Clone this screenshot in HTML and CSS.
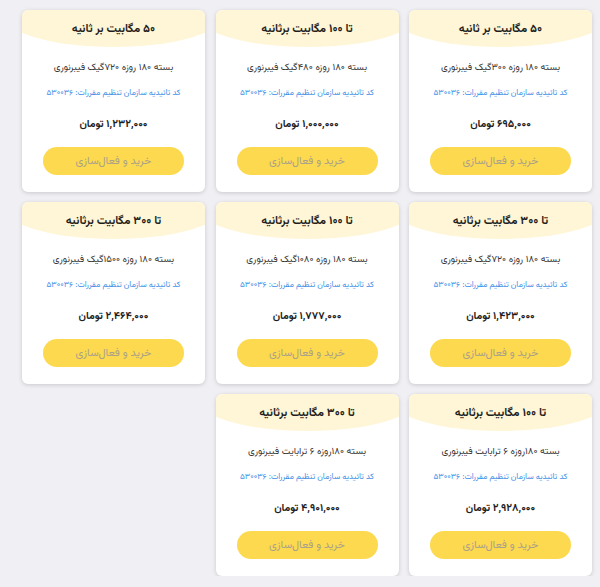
FILE: index.html
```html
<!DOCTYPE html>
<html lang="fa" dir="rtl">
<head>
<meta charset="utf-8">
<title>بسته‌های اینترنت</title>
<link rel="stylesheet" href="styles.css">
</head>
<body>
<div class="grid">
  <div class="card">
    <div class="head"><h3 class="title">۵۰ مگابیت بر ثانیه</h3></div>
    <p class="desc">بسته ۱۸۰ روزه ۳۰۰گیک فیبرنوری</p>
    <p class="code">کد تائیدیه سازمان تنظیم مقررات: ۵۳۰۰۳۶</p>
    <p class="price">۶۹۵,۰۰۰ تومان</p>
    <button class="buy">خرید و فعال‌سازی</button>
  </div>
  <div class="card">
    <div class="head"><h3 class="title">تا ۱۰۰ مگابیت برثانیه</h3></div>
    <p class="desc">بسته ۱۸۰ روزه ۴۸۰گیک فیبرنوری</p>
    <p class="code">کد تائیدیه سازمان تنظیم مقررات: ۵۳۰۰۳۶</p>
    <p class="price">۱,۰۰۰,۰۰۰ تومان</p>
    <button class="buy">خرید و فعال‌سازی</button>
  </div>
  <div class="card">
    <div class="head"><h3 class="title">۵۰ مگابیت بر ثانیه</h3></div>
    <p class="desc">بسته ۱۸۰ روزه ۷۲۰گیک فیبرنوری</p>
    <p class="code">کد تائیدیه سازمان تنظیم مقررات: ۵۳۰۰۳۶</p>
    <p class="price">۱,۲۳۲,۰۰۰ تومان</p>
    <button class="buy">خرید و فعال‌سازی</button>
  </div>
  <div class="card">
    <div class="head"><h3 class="title">تا ۳۰۰ مگابیت برثانیه</h3></div>
    <p class="desc">بسته ۱۸۰ روزه ۷۲۰گیک فیبرنوری</p>
    <p class="code">کد تائیدیه سازمان تنظیم مقررات: ۵۳۰۰۳۶</p>
    <p class="price">۱,۴۲۳,۰۰۰ تومان</p>
    <button class="buy">خرید و فعال‌سازی</button>
  </div>
  <div class="card">
    <div class="head"><h3 class="title">تا ۱۰۰ مگابیت برثانیه</h3></div>
    <p class="desc">بسته ۱۸۰ روزه ۱۰۸۰گیک فیبرنوری</p>
    <p class="code">کد تائیدیه سازمان تنظیم مقررات: ۵۳۰۰۳۶</p>
    <p class="price">۱,۷۷۷,۰۰۰ تومان</p>
    <button class="buy">خرید و فعال‌سازی</button>
  </div>
  <div class="card">
    <div class="head"><h3 class="title">تا ۳۰۰ مگابیت برثانیه</h3></div>
    <p class="desc">بسته ۱۸۰ روزه ۱۵۰۰گیک فیبرنوری</p>
    <p class="code">کد تائیدیه سازمان تنظیم مقررات: ۵۳۰۰۳۶</p>
    <p class="price">۲,۴۶۴,۰۰۰ تومان</p>
    <button class="buy">خرید و فعال‌سازی</button>
  </div>
  <div class="card">
    <div class="head"><h3 class="title">تا ۱۰۰ مگابیت برثانیه</h3></div>
    <p class="desc">بسته ۱۸۰روزه ۶ ترابایت فیبرنوری</p>
    <p class="code">کد تائیدیه سازمان تنظیم مقررات: ۵۳۰۰۳۶</p>
    <p class="price">۲,۹۲۸,۰۰۰ تومان</p>
    <button class="buy">خرید و فعال‌سازی</button>
  </div>
  <div class="card">
    <div class="head"><h3 class="title">تا ۳۰۰ مگابیت برثانیه</h3></div>
    <p class="desc">بسته ۱۸۰روزه ۶ ترابایت فیبرنوری</p>
    <p class="code">کد تائیدیه سازمان تنظیم مقررات: ۵۳۰۰۳۶</p>
    <p class="price">۴,۹۰۱,۰۰۰ تومان</p>
    <button class="buy">خرید و فعال‌سازی</button>
  </div>
</div>
</body>
</html>
```
FILE: styles.css
```css
html, body {
  margin: 0;
  background: #efeff4;
}
body {
  padding: 10px 8px 0 8px;
  font-family: "Vazirmatn", "DejaVu Sans", sans-serif;
  color: #222;
}
.grid {
  display: grid;
  grid-template-columns: repeat(3, 183px);
  column-gap: 10.5px;
  row-gap: 10px;
  justify-content: start;
}
.card {
  background: #fff;
  border-radius: 6px;
  box-shadow: 0 1px 4px rgba(0, 0, 0, 0.16);
  height: 182px;
  overflow: hidden;
  display: flex;
  flex-direction: column;
  align-items: center;
  text-align: center;
}
.head {
  align-self: stretch;
  margin: 0 -20px;
  height: 37px;
  background: #fef6d6;
  border-radius: 0 0 50% 50% / 0 0 33px 33px;
  display: flex;
  justify-content: center;
}
.title {
  margin: 11px 0 0;
  font-size: 11.5px;
  font-weight: bold;
  line-height: 16px;
  color: #1e1e1e;
}
.desc {
  margin: 13px 0 0;
  font-size: 9.6px;
  line-height: 16px;
  color: #333;
}
.code {
  margin: 10px 0 0;
  font-size: 8.2px;
  line-height: 14px;
  color: #3c8ee6;
}
.price {
  margin: 16px 0 0;
  font-size: 10.6px;
  font-weight: bold;
  line-height: 18px;
  color: #1e1e1e;
}
.buy {
  margin-top: 13px;
  width: 141px;
  height: 28px;
  border: none;
  border-radius: 14px;
  background: #fdd94f;
  color: #aaa189;
  font-family: inherit;
  font-size: 11px;
  padding: 0;
}
```
